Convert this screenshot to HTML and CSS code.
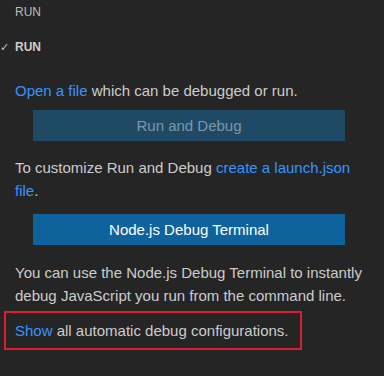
FILE: index.html
```html
<!DOCTYPE html>
<html>
<head>
<meta charset="utf-8">
<link rel="stylesheet" href="styles.css">
</head>
<body>
<div class="view">
  <div class="title">RUN</div>
  <div class="section"><span class="check">✓</span><span class="section-name">RUN</span></div>
  <div class="content">
    <p class="para first"><a class="link">Open a file</a> which can be debugged or run.</p>
    <div class="btn disabled">Run and Debug</div>
    <p class="para">To customize Run and Debug <a class="link">create a launch.json</a> <a class="link">file</a>.</p>
    <div class="btn primary">Node.js Debug Terminal</div>
    <p class="para">You can use the Node.js Debug Terminal to instantly debug JavaScript you run from the command line.</p>
    <div class="highlight"><a class="link">Show</a> all automatic debug configurations.</div>
  </div>
</div>
</body>
</html>
```
FILE: styles.css
```css
html, body {
  margin: 0;
  padding: 0;
  background: #252526;
}
.view {
  width: 384px;
  height: 376px;
  font-family: "Liberation Sans", Arial, sans-serif;
  color: #cccccc;
  overflow: hidden;
}
.title {
  height: 24px;
  line-height: 24px;
  padding-left: 15px;
  font-size: 12px;
  color: #bbbbbb;
}
.section {
  height: 22px;
  line-height: 22px;
  margin-top: 12px;
  display: flex;
  align-items: center;
  font-size: 12px;
  font-weight: bold;
}
.check {
  width: 15px;
  font-weight: normal;
  font-size: 11px;
  color: #c5c5c5;
}
.content {
  padding: 0 8px 0 15px;
}
.para {
  margin: 0;
  font-size: 15px;
  line-height: 23px;
}
.para.first {
  margin-top: 21px;
}
.link {
  color: #3794ff;
}
.btn {
  margin-left: 18px;
  width: 312px;
  height: 31px;
  line-height: 31px;
  text-align: center;
  font-size: 15px;
}
.btn.disabled {
  background: #1e4a66;
  color: #7e97ab;
  margin-top: 8px;
  margin-bottom: 15px;
}
.btn.primary {
  background: #0e639c;
  color: #ffffff;
  margin-top: 12px;
  margin-bottom: 16px;
}
.highlight {
  margin: 4px 0 0 -11px;
  width: 298px;
  height: 39px;
  line-height: 35px;
  border: 2px solid #dc1c30;
  padding-left: 9px;
  font-size: 15px;
  box-sizing: border-box;
}
```
